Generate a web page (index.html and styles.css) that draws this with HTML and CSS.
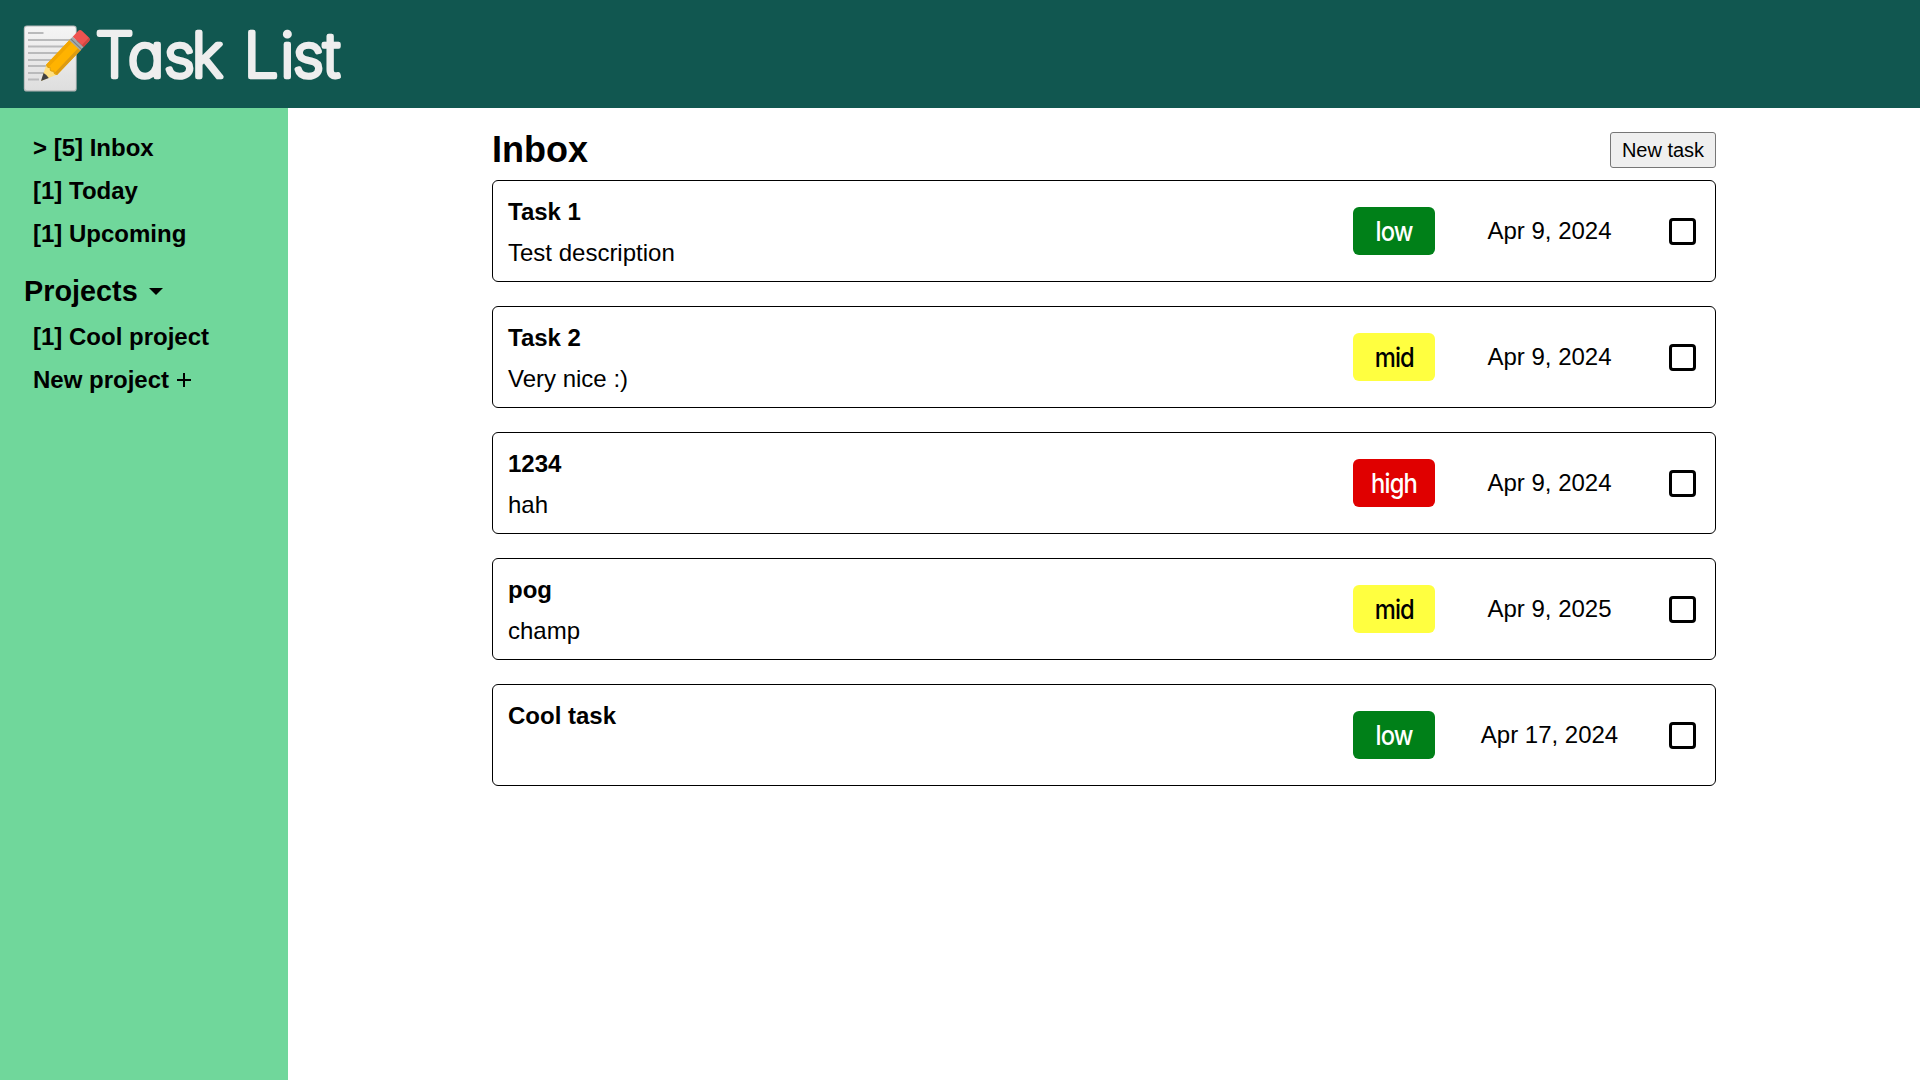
FILE: index.html
```html
<!DOCTYPE html>
<html lang="en">
<head>
<meta charset="utf-8">
<title>Task List</title>
<link rel="stylesheet" href="styles.css">
</head>
<body>
<header class="header">
  <svg class="logo" viewBox="0 0 68 68">
    <defs>
      <linearGradient id="paper" x1="0" y1="0" x2="0" y2="1"><stop offset="0" stop-color="#f5f5f5"/><stop offset="1" stop-color="#dedede"/></linearGradient>
    </defs>
    <rect x="-0.2" y="0.6" width="52.900" height="66" rx="3.2" fill="#b5b8b8"/>
    <rect x="0.8" y="1.4" width="51" height="63.800" rx="2.5" fill="url(#paper)"/>
    <path d="M4 8h15.500M4 15h42M4 21.500h38M4 28h32M4 35h27M4 41h23M4 48h19M4 54.500h11" stroke="#b9babb" stroke-width="2"/>
    <g transform="translate(17 56) rotate(-46.500)">
      <path d="M0 0L16-7.500V7.500Z" fill="#ffe082"/>
      <path d="M0 0L7.500-3.600Q8.500 0 7.500 3.600Z" fill="#424242"/>
      <path d="M16-7.500H50V7.500H16Q13.500 5 16 2.500Q12.500 0 16-2.500Q13.500-5 16-7.500Z" fill="#ffb300"/>
      <path d="M16-7.500H50V-4H15.500Q14.500-5.500 16-7.500Z" fill="#f2a600"/>
      <path d="M15.500 4.300H50V7.500H16Z" fill="#dc9b12"/>
      <path d="M16-7.500Q13.500-5 16-2.500Q12.500 0 16 2.500Q13.500 5 16 7.500" fill="none" stroke="#dda010"/>
      <path d="M49-7.500H54V7.500H49Z" fill="#a4a9ab"/>
      <path d="M51-7.500V7.500" stroke="#757d80"/>
      <path d="M54-7.500H61.500Q64.500-7.500 64.500-4.500V4.500Q64.500 7.500 61.500 7.500H54Z" fill="#ef5350"/>
      <path d="M54 5H64.300Q64 7.500 61.500 7.500H54Z" fill="#cf4641"/>
    </g>
  </svg>
  <svg class="wordmark" viewBox="0 0 256 108"><text y="77" x="-0.500 32 68 96 148 184.500 197 227.500">TaskList</text></svg>
</header>
<div class="layout">
  <nav class="sidebar">
    <ul class="links">
      <li>&gt; [5] Inbox</li>
      <li>[1] Today</li>
      <li>[1] Upcoming</li>
    </ul>
    <h2 class="projects">Projects <svg class="caret" viewBox="0 0 14 7"><path d="M0 0H14L7 7Z"/></svg></h2>
    <ul class="links">
      <li>[1] Cool project</li>
      <li>New project <svg class="plus" viewBox="0 0 14 14"><path d="M7 0V14M0 7H14"/></svg></li>
    </ul>
  </nav>
  <main class="main">
    <div class="top"><h1 class="title">Inbox</h1><button class="new">New task</button></div>
    <div class="tasks">
      <article class="task"><div class="info"><h3>Task 1</h3><p>Test description</p></div><div class="badge low"><span>low</span></div><time class="date">Apr 9, 2024</time><span class="check"></span></article>
      <article class="task"><div class="info"><h3>Task 2</h3><p>Very nice :)</p></div><div class="badge mid"><span>mid</span></div><time class="date">Apr 9, 2024</time><span class="check"></span></article>
      <article class="task"><div class="info"><h3>1234</h3><p>hah</p></div><div class="badge high"><span>high</span></div><time class="date">Apr 9, 2024</time><span class="check"></span></article>
      <article class="task"><div class="info"><h3>pog</h3><p>champ</p></div><div class="badge mid"><span>mid</span></div><time class="date">Apr 9, 2025</time><span class="check"></span></article>
      <article class="task"><div class="info"><h3>Cool task</h3><p></p></div><div class="badge low"><span>low</span></div><time class="date">Apr 17, 2024</time><span class="check"></span></article>
    </div>
  </main>
</div>
</body>
</html>
```
FILE: styles.css
```css
* { box-sizing: border-box; margin: 0; padding: 0; }
body {
  height: 100vh;
  display: flex;
  flex-direction: column;
  font: 24px/27px "Liberation Sans", Arial, sans-serif;
  color: #000;
  background: #fff;
}
.header {
  height: 108px;
  padding-left: 24px;
  display: flex;
  align-items: center;
  background: #115750;
}
.logo { width: 68px; height: 68px; margin-top: 9px; overflow: visible; }
.wordmark { width: 256px; height: 108px; margin-left: 4px; overflow: visible; }
.wordmark text {
  font-family: Inter, sans-serif;
  font-size: 61px;
  font-weight: 200;
  font-feature-settings: "cv11";
  fill: #eee;
  stroke: #eee;
  stroke-width: 4.6px;
  stroke-linejoin: round;
}
.layout { flex: 1; display: flex; }
.sidebar { width: 288px; padding: 18px 24px; background: #70d79b; }
.links { list-style: none; padding-left: 9px; font-weight: bold; }
.links li { height: 43px; padding: 8px 0; white-space: nowrap; }
.projects { font-size: 28.8px; line-height: 33px; margin: 20px 0 7px; }
.caret { width: 14px; height: 7px; margin-left: 3px; vertical-align: 6px; }
.plus { width: 14px; height: 14px; margin-left: 1px; vertical-align: 1px; }
.plus path { stroke: #000; stroke-width: 2; }
.main { flex: 1; padding: 24px 204px; }
.top { display: flex; justify-content: space-between; height: 48px; }
.title { font-size: 36px; line-height: 36px; }
.new {
  width: 106px;
  height: 36px;
  font: 20px "Liberation Sans", Arial, sans-serif;
  color: #000;
  background: #efefef;
  border: 1px solid #767676;
  border-radius: 3px;
}
.tasks { display: flex; flex-direction: column; gap: 24px; }
.task {
  height: 102px;
  padding: 0 19px 0 15px;
  display: flex;
  align-items: center;
  border: 1px solid #000;
  border-radius: 6px;
}
.info { flex: 1; height: 66px; display: flex; flex-direction: column; gap: 14px; }
.info h3 { font-size: 24px; }
.badge {
  width: 82px;
  height: 48px;
  border-radius: 6px;
  text-align: center;
  font: 500 27px/50px Inter, sans-serif;
  letter-spacing: -1px;
}
.badge span { display: inline-block; transform: scaleX(0.88); }
.low { background: #008018; color: #fff; }
.mid { background: #ffff40; }
.high { background: #e00000; color: #fff; }
.date { width: 229px; padding-bottom: 2px; text-align: center; }
.check { width: 27px; height: 27px; margin-left: 5px; border: 3px solid #000; border-radius: 4px; }
```
